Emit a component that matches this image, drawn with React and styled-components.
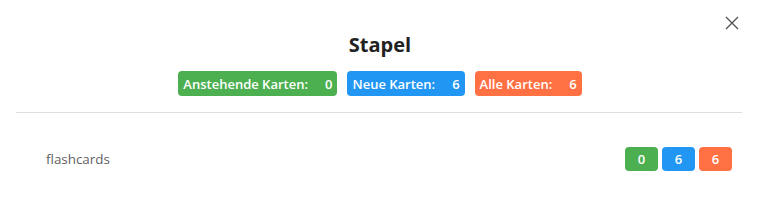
import React from 'react'
import styled, { createGlobalStyle } from 'styled-components'

const GlobalStyle = createGlobalStyle`
  body {
    margin: 0;
    background: #ffffff;
    font-family: "Open Sans", "Noto Sans", sans-serif;
  }
`

const colors = {
  green: '#4caf50',
  blue: '#2196f3',
  orange: '#ff7043',
}

const Modal = styled.div`
  position: relative;
  width: 760px;
  height: 206px;
  background: #fff;
`

const Header = styled.div`
  display: flex;
  flex-direction: column;
  align-items: center;
  padding: 31px 0 16px;
`

const Title = styled.h2`
  margin: 0;
  font-size: 20px;
  line-height: 28px;
  font-weight: 700;
  color: #212121;
`

const Stats = styled.div`
  display: flex;
  gap: 10px;
  margin-top: 12px;
`

const StatBadge = styled.div`
  display: flex;
  align-items: center;
  justify-content: space-between;
  height: 25px;
  padding: 0 5px;
  border-radius: 4px;
  background: ${p => colors[p.$color]};
  color: #fff;
  font-size: 13px;
  font-weight: 600;
`

const StatLabel = styled.span`
  margin-right: 17px;
`

const Divider = styled.hr`
  margin: 0 18px 0 16px;
  border: 0;
  border-top: 1px solid #dedede;
`

const DeckRow = styled.div`
  display: flex;
  align-items: center;
  justify-content: space-between;
  padding: 34px 28px 0 46px;
`

const DeckName = styled.span`
  font-size: 13.4px;
  color: #5f5f5f;
`

const Counts = styled.div`
  display: flex;
  gap: 4px;
`

const CountBadge = styled.span`
  display: flex;
  align-items: center;
  justify-content: center;
  width: 33px;
  height: 24px;
  border-radius: 4px;
  background: ${p => colors[p.$color]};
  color: #fff;
  font-size: 13px;
  font-weight: 600;
`

const CloseButton = styled.button`
  position: absolute;
  top: 14px;
  right: 19px;
  width: 18px;
  height: 18px;
  padding: 0;
  border: 0;
  background: none;
  display: flex;
  align-items: center;
  justify-content: center;
  cursor: pointer;
`

export default function App() {
  return (
    <>
      <GlobalStyle />
      <Modal>
        <CloseButton aria-label="close">
          <svg width="14" height="14" viewBox="0 0 14 14">
            <path d="M1 1 L13 13 M13 1 L1 13" stroke="#555" strokeWidth="1.4" fill="none" />
          </svg>
        </CloseButton>
        <Header>
          <Title>Stapel</Title>
          <Stats>
            <StatBadge $color="green">
              <StatLabel>Anstehende Karten:</StatLabel>
              <span>0</span>
            </StatBadge>
            <StatBadge $color="blue">
              <StatLabel>Neue Karten:</StatLabel>
              <span>6</span>
            </StatBadge>
            <StatBadge $color="orange">
              <StatLabel>Alle Karten:</StatLabel>
              <span>6</span>
            </StatBadge>
          </Stats>
        </Header>
        <Divider />
        <DeckRow>
          <DeckName>flashcards</DeckName>
          <Counts>
            <CountBadge $color="green">0</CountBadge>
            <CountBadge $color="blue">6</CountBadge>
            <CountBadge $color="orange">6</CountBadge>
          </Counts>
        </DeckRow>
      </Modal>
    </>
  )
}
